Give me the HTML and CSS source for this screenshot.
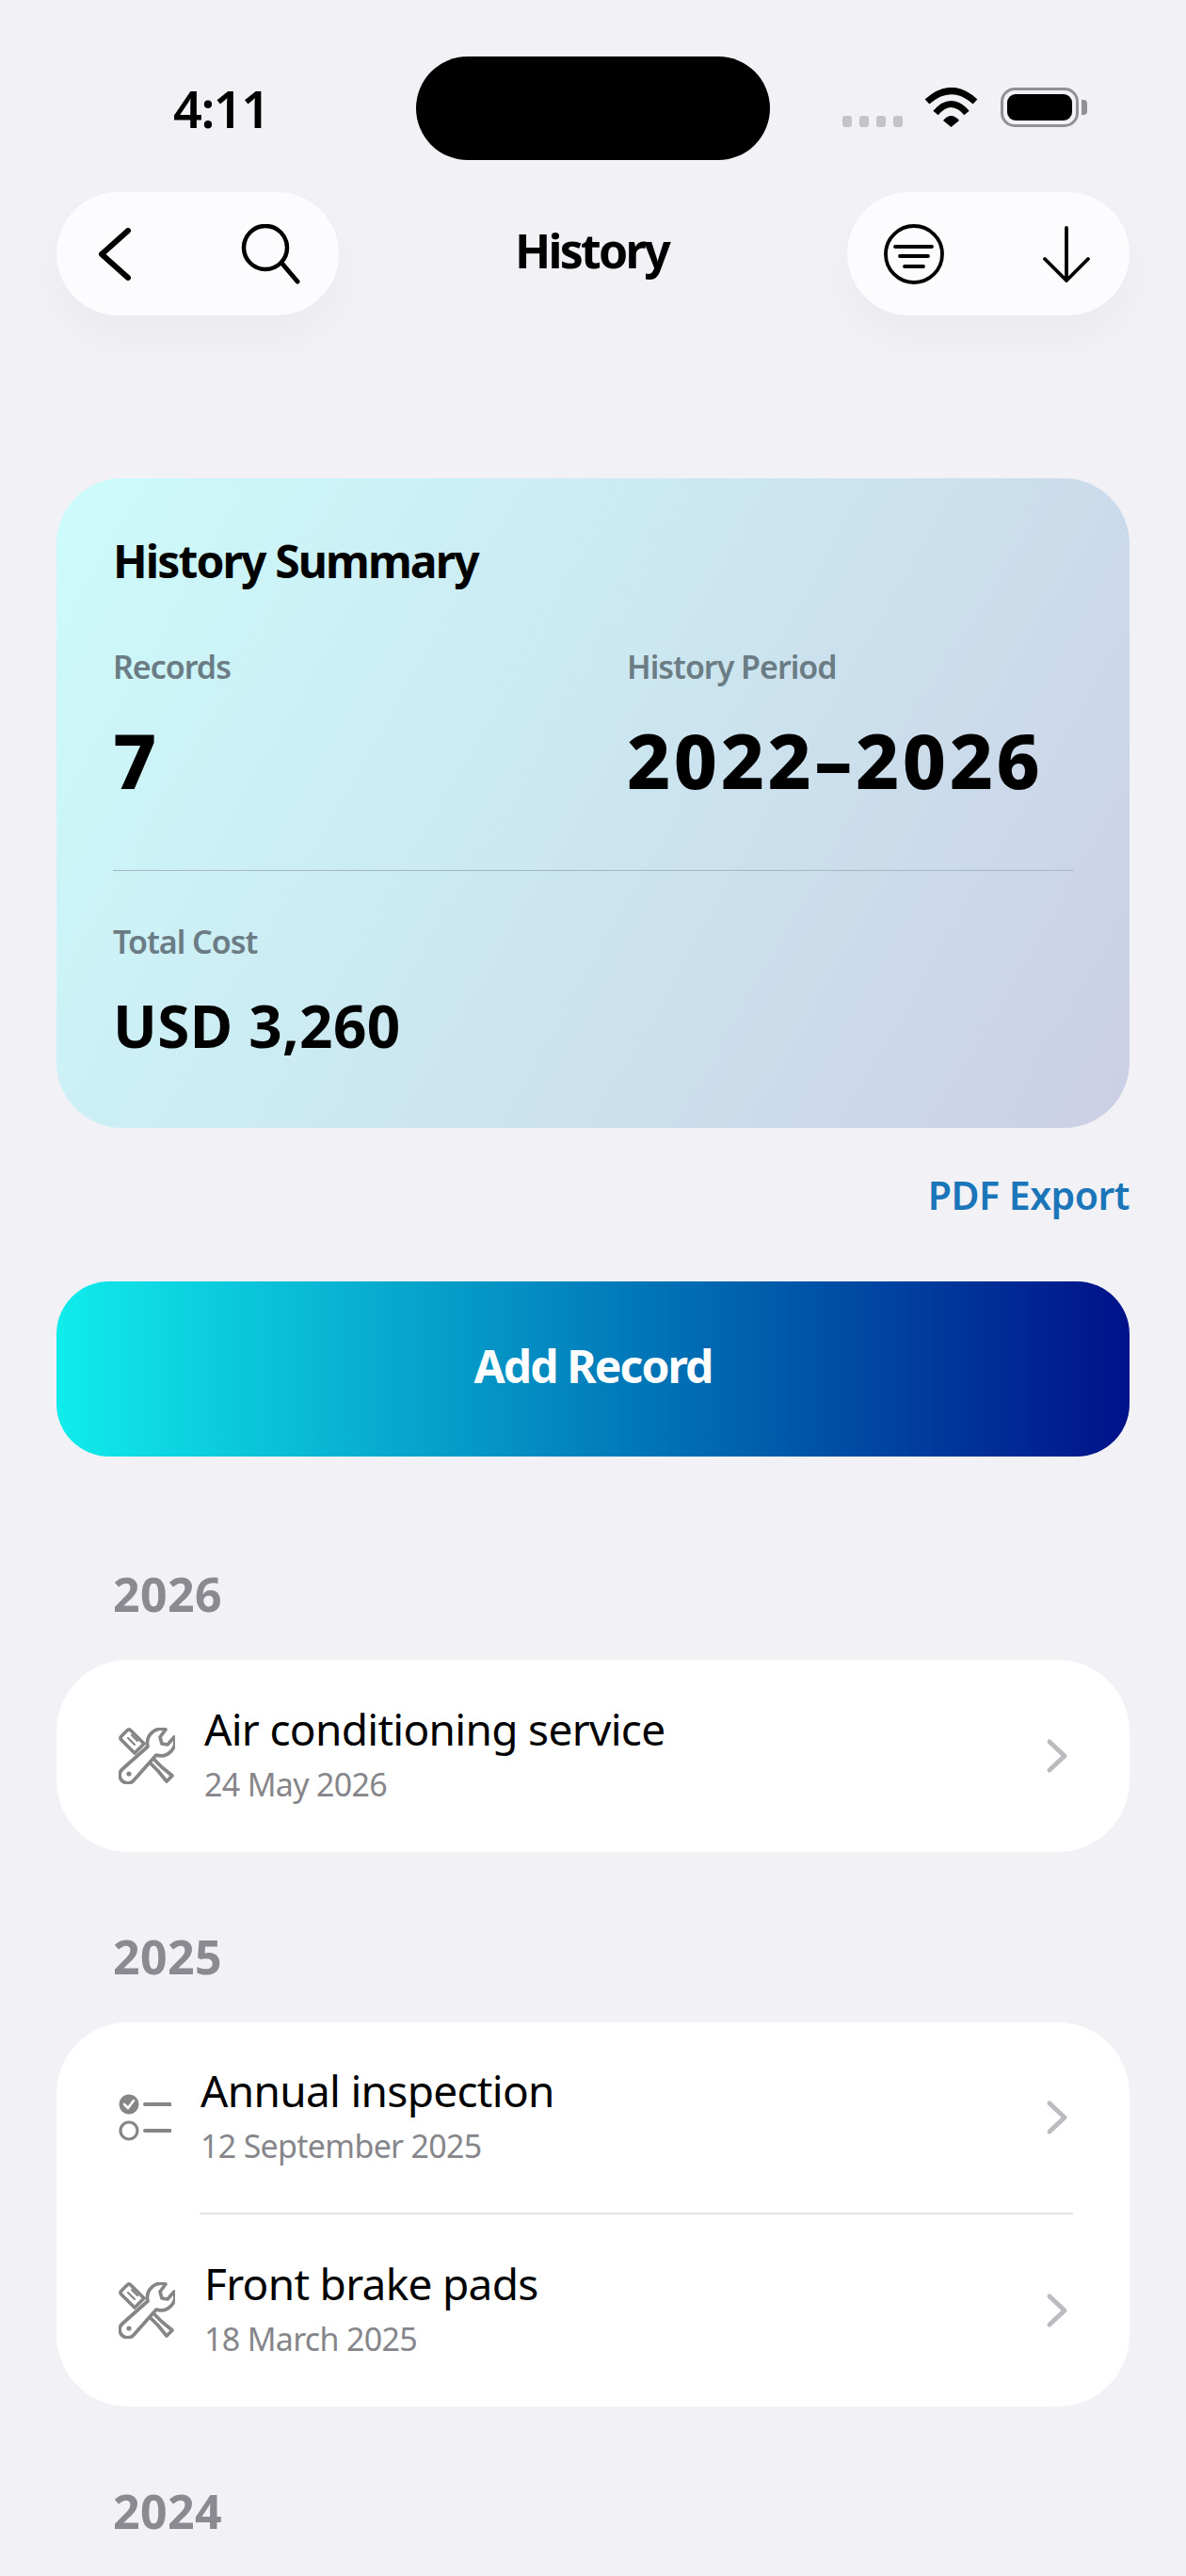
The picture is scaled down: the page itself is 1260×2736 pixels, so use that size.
FILE: index.html
```html
<!DOCTYPE html>
<html lang="en">
<head>
    <meta charset="UTF-8">
    <meta name="viewport" content="width=device-width, initial-scale=1.0">
    <title>History</title>
    <link rel="stylesheet" href="styles.css">
</head>
<body>
    <svg class="icon-defs" width="0" height="0">
        <symbol id="tools" viewBox="0 0 60 60">
            <g fill="#fff" stroke="#868686" stroke-width="3.7" stroke-linejoin="round" stroke-linecap="round">
                <path d="M3 9 L9 3 Q11 1 13 3 L27 17 L17 27 L3 13 Q1 11 3 9Z"/>
                <path d="M10 11 L17 18 M14 8 L20 14" stroke-width="2.2"/>
                <path d="M34 30 L46 42 L57 51 L51 57 L42 46 L30 34"/>
                <path d="M50 2 A15 15 0 0 0 31 20 L4 44 A8.5 8.5 0 1 0 16 56 L40 29 A15 15 0 0 0 59 10 L52 18 L46 17 L44 10 Z"/>
            </g>
            <circle cx="11" cy="49" r="2.6" fill="#868686"/>
        </symbol>
        <symbol id="chevron" viewBox="0 0 26 38">
            <path d="M5 4 L21 19 L5 34" fill="none" stroke="#bcbcc0" stroke-width="5" stroke-linecap="round" stroke-linejoin="round"/>
        </symbol>
    </svg>

    <div class="page">
        <div class="status-bar">
            <div class="time">4:11</div>
            <div class="island"></div>
            <div class="status-icons">
                <div class="signal"><span></span><span></span><span></span><span></span></div>
                <svg class="wifi" width="57" height="42" viewBox="0 0 57 42">
                    <path d="M3 15 Q28.5 -8 54 15" fill="none" stroke="#000" stroke-width="7"/>
                    <path d="M12 27 Q28.5 8 45 27" fill="none" stroke="#000" stroke-width="7"/>
                    <path d="M20 35 Q28.5 25 37 35 L28.5 42Z" fill="#000"/>
                </svg>
                <div class="battery"><div class="battery-fill"></div></div>
                <div class="battery-nub"></div>
            </div>
        </div>

        <div class="nav">
            <div class="pill pill-left">
                <svg width="36" height="56" viewBox="0 0 36 56">
                    <path d="M32 3 L4 28 L32 53" fill="none" stroke="#000" stroke-width="6" stroke-linecap="round" stroke-linejoin="round"/>
                </svg>
                <svg width="64" height="64" viewBox="0 0 64 64">
                    <circle cx="26" cy="25" r="23" fill="none" stroke="#000" stroke-width="4.5"/>
                    <path d="M43 41 L60 61" fill="none" stroke="#000" stroke-width="5" stroke-linecap="round"/>
                </svg>
            </div>
            <div class="nav-title">History</div>
            <div class="pill pill-right">
                <svg width="64" height="64" viewBox="0 0 64 64">
                    <circle cx="32" cy="32" r="30" fill="none" stroke="#000" stroke-width="3.8"/>
                    <path d="M12 24 H51 M17 34 H47 M22 45 H42" fill="none" stroke="#000" stroke-width="3.8" stroke-linecap="round"/>
                </svg>
                <svg width="50" height="62" viewBox="0 0 50 62">
                    <path d="M25 3 V59 M2 36 L25 59 L48 36" fill="none" stroke="#000" stroke-width="3.8" stroke-linecap="round" stroke-linejoin="round"/>
                </svg>
            </div>
        </div>

        <div class="summary">
            <div class="summary-title">History Summary</div>
            <div class="summary-grid">
                <div>
                    <div class="summary-label">Records</div>
                    <div class="summary-big">7</div>
                </div>
                <div>
                    <div class="summary-label">History Period</div>
                    <div class="summary-big">2022–2026</div>
                </div>
            </div>
            <div class="summary-line"></div>
            <div class="summary-label">Total Cost</div>
            <div class="summary-cost">USD 3,260</div>
        </div>

        <div class="export-row"><span class="export-link">PDF Export</span></div>
        <div class="add-btn">Add Record</div>

        <div class="year year-first">2026</div>
        <div class="list">
            <div class="row">
                <svg class="row-icon"><use href="#tools"/></svg>
                <div class="row-text">
                    <div class="row-title">Air conditioning service</div>
                    <div class="row-date">24 May 2026</div>
                </div>
                <svg class="chevron"><use href="#chevron"/></svg>
            </div>
        </div>

        <div class="year">2025</div>
        <div class="list">
            <div class="row row-top">
                <svg class="row-icon row-icon-check" viewBox="0 0 56 50">
                    <circle cx="11" cy="11" r="10.5" fill="#868686"/>
                    <path d="M6 11 L10 15 L16 7" fill="none" stroke="#fff" stroke-width="2.6" stroke-linecap="round" stroke-linejoin="round"/>
                    <path d="M28 11 H55 M28 39 H55" fill="none" stroke="#868686" stroke-width="4" stroke-linecap="round"/>
                    <circle cx="11" cy="39" r="9" fill="none" stroke="#868686" stroke-width="3.2"/>
                </svg>
                <div class="row-text">
                    <div class="row-title">Annual inspection</div>
                    <div class="row-date">12 September 2025</div>
                </div>
                <svg class="chevron"><use href="#chevron"/></svg>
            </div>
            <div class="row-line"></div>
            <div class="row">
                <svg class="row-icon"><use href="#tools"/></svg>
                <div class="row-text">
                    <div class="row-title">Front brake pads</div>
                    <div class="row-date">18 March 2025</div>
                </div>
                <svg class="chevron"><use href="#chevron"/></svg>
            </div>
        </div>

        <div class="year">2024</div>
    </div>
</body>
</html>
```

FILE: styles.css
```css
* {
    margin: 0;
    padding: 0;
    box-sizing: border-box;
}

body {
    font-family: 'Noto Sans', sans-serif;
    background: #f1f1f6;
    color: #000;
}

.icon-defs {
    display: block;
    height: 0;
}

.page {
    height: 2736px;
    overflow: hidden;
    padding: 0 60px;
}

.status-bar {
    height: 204px;
    display: flex;
    align-items: flex-start;
    padding-top: 60px;
}

.time {
    width: 382px;
    padding-left: 124px;
    font-size: 54px;
    line-height: 110px;
    font-weight: 600;
    letter-spacing: -1.5px;
}

.island {
    width: 376px;
    height: 110px;
    background: #000;
    border-radius: 55px;
}

.status-icons {
    display: flex;
    align-items: flex-end;
    margin-top: 33px;
    margin-left: 77px;
}

.signal {
    display: flex;
    gap: 8px;
    margin-right: 23px;
}

.signal span {
    width: 10px;
    height: 12px;
    background: #c3c3c8;
    border-radius: 3px;
}

.wifi {
    margin-right: 24px;
}

.battery {
    width: 83px;
    height: 42px;
    border: 3px solid #909095;
    border-radius: 15px;
    padding: 4px;
}

.battery-fill {
    height: 100%;
    background: #000;
    border-radius: 9px;
}

.battery-nub {
    width: 6px;
    height: 16px;
    margin: 0 0 13px 3px;
    background: #909095;
    border-radius: 0 4px 4px 0;
}

.nav {
    display: flex;
    justify-content: space-between;
    align-items: center;
}

.pill {
    width: 300px;
    height: 131px;
    background: #fcfcfe;
    border-radius: 66px;
    display: flex;
    justify-content: space-between;
    align-items: center;
    box-shadow: 0 24px 50px rgba(0, 0, 0, 0.03);
}

.pill-left {
    padding: 0 40px 0 44px;
}

.pill-right {
    padding: 0 42px 0 39px;
}

.nav-title {
    font-size: 50px;
    font-weight: 700;
    letter-spacing: -2.7px;
    padding: 0 3px 7px 0;
}

.summary {
    margin-top: 173px;
    height: 690px;
    padding: 54px 60px 0;
    border-radius: 70px;
    background: linear-gradient(120deg, #cdfbfb 0%, #cbe4ef 55%, #cccfe5 100%);
}

.summary-title {
    font-size: 48px;
    line-height: 68px;
    font-weight: 700;
    letter-spacing: -1.9px;
}

.summary-grid {
    display: grid;
    grid-template-columns: 546px 1fr;
    margin-top: 54px;
}

.summary-label {
    font-size: 34px;
    line-height: 48px;
    font-weight: 600;
    letter-spacing: -1px;
    color: #6b7c85;
}

.summary-big {
    font-size: 80px;
    line-height: 110px;
    font-weight: 800;
    letter-spacing: 3.6px;
    margin-top: 20px;
}

.summary-line {
    height: 1px;
    margin-top: 62px;
    margin-bottom: 51px;
    background: #a3b7c3;
}

.summary-cost {
    font-size: 62px;
    line-height: 84px;
    font-weight: 700;
    letter-spacing: 0.4px;
    margin-top: 23px;
}

.export-row {
    display: flex;
    justify-content: flex-end;
    margin-top: 43px;
}

.export-link {
    font-size: 41px;
    line-height: 56px;
    font-weight: 600;
    letter-spacing: -0.5px;
    color: #1a75b9;
}

.add-btn {
    margin-top: 64px;
    height: 186px;
    padding-bottom: 8px;
    border-radius: 56px;
    display: flex;
    align-items: center;
    justify-content: center;
    color: #fff;
    font-size: 48px;
    font-weight: 700;
    letter-spacing: -1.9px;
    background: linear-gradient(90deg, #10ecec 0%, #0071b5 57%, #00118a 100%);
}

.year {
    padding-left: 60px;
    margin-top: 77px;
    margin-bottom: 36px;
    font-size: 50px;
    line-height: 68px;
    font-weight: 700;
    letter-spacing: 0.4px;
    color: #8a8a90;
}

.year-first {
    margin-top: 112px;
}

.list {
    background: #fff;
    border-radius: 76px;
}

.row {
    height: 204px;
    display: flex;
    align-items: center;
    padding: 0 60px 0 66px;
}

.row-top {
    height: 202px;
}

.row-icon {
    width: 60px;
    height: 60px;
    flex-shrink: 0;
}

.row-icon-check {
    width: 56px;
    height: 50px;
}

.row-text {
    flex: 1;
    padding-left: 31px;
    padding-bottom: 5px;
}

.row-title {
    font-size: 46px;
    line-height: 60px;
    letter-spacing: -0.7px;
}

.row-date {
    font-size: 34px;
    line-height: 48px;
    letter-spacing: -0.7px;
    margin-top: 5px;
    color: #86868a;
}

.chevron {
    width: 26px;
    height: 38px;
    margin-right: 4px;
}

.row-line {
    height: 2px;
    margin: 0 60px 0 152px;
    background: #e4e4e7;
}
```
